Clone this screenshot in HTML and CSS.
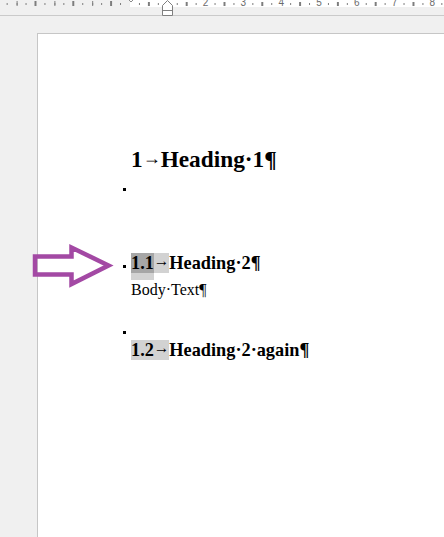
FILE: index.html
```html
<!DOCTYPE html>
<html>
<head>
<meta charset="utf-8">
<link rel="stylesheet" href="styles.css">
</head>
<body>
<div class="ruler">
  <div class="ruler-margin"></div>
  <div class="ruler-body">
    <div class="ruler-nums">
      <span></span><span></span><span>2</span><span>3</span><span>4</span><span>5</span><span>6</span><span>7</span><span>8</span>
    </div>
  </div>
  <svg class="first-indent" width="14" height="4" viewBox="0 0 14 4"><path d="M2 -3 L7 2 L12 -3" fill="#fff" stroke="#8a8a8a" stroke-width="1"/></svg>
  <svg class="left-indent" width="14" height="17" viewBox="0 0 14 17"><path d="M1.5 15.5 V5.5 L6.5 0.5 L11.5 5.5 V15.5 Z M1.5 10.5 H11.5" fill="#fff" stroke="#7f7f7f" stroke-width="1"/></svg>
</div>
<div class="workspace">
  <div class="page">
    <div class="para h1"><span class="mk"></span><span class="line"><span class="num">1</span><span class="tab tab-h1">→</span>Heading·1¶</span></div>
    <div class="para empty1"><span class="mk on"></span></div>
    <div class="para h2 first"><span class="mk on"></span><span class="line"><span class="field"><span class="num sel">1.1</span><span class="tab tab-h2">→</span></span>Heading·2¶</span></div>
    <div class="para body"><span class="mk"></span><span class="line">Body·Text¶</span></div>
    <div class="para empty2"><span class="mk on"></span></div>
    <div class="para h2 again"><span class="mk"></span><span class="line"><span class="field"><span class="num">1.2</span><span class="tab tab-h2">→</span></span>Heading·2·again¶</span></div>
  </div>
</div>
<svg class="callout" width="90" height="52" viewBox="28 240 90 52"><polygon points="35,256.5 71.5,256.5 71.5,247.5 108.5,265.5 71.5,284 71.5,274.5 35,274.5" fill="none" stroke="#a349a4" stroke-width="4.5" stroke-linejoin="miter"/></svg>
</body>
</html>
```

FILE: styles.css
```css
html, body {
  margin: 0;
  padding: 0;
}
body {
  width: 444px;
  height: 537px;
  overflow: hidden;
  background: #f0f0f0;
  font-family: "Liberation Serif", "Times New Roman", serif;
  position: relative;
}
.ruler {
  position: relative;
  display: flex;
  height: 15px;
  border-bottom: 1px solid #cacaca;
}
.ruler-margin {
  flex: 0 0 130px;
  background-image:
    linear-gradient(to right, #7d7d7d 0, #7d7d7d 1px, transparent 1px, transparent 9px, #7d7d7d 9px, #7d7d7d 10px, transparent 10px, transparent 28px, #7d7d7d 28px, #7d7d7d 29px, transparent 29px),
    linear-gradient(to right, #7d7d7d 0, #7d7d7d 1px, transparent 1px, transparent 18.4px, #7d7d7d 18.4px, #7d7d7d 19.4px, transparent 19.4px);
  background-size: 37.8px 2px, 37.8px 5px;
  background-position: 16.6px 3px, 16.6px 1px;
  background-repeat: repeat-x, repeat-x;
}
.ruler-body {
  flex: 1 1 auto;
  overflow: hidden;
  background-image:
    linear-gradient(to right, transparent 9px, #7d7d7d 9px, #7d7d7d 10px, transparent 10px, transparent 28px, #7d7d7d 28px, #7d7d7d 29px, transparent 29px),
    linear-gradient(to right, transparent 18.4px, #7d7d7d 18.4px, #7d7d7d 19.4px, transparent 19.4px),
    linear-gradient(#ffffff, #ffffff);
  background-size: 37.8px 2px, 37.8px 4px, 100% 7px;
  background-position: 0 3px, 0 2px, 0 0;
  background-repeat: repeat-x, repeat-x, no-repeat;
}
.ruler-nums {
  display: flex;
  margin-left: -18.9px;
  margin-top: -2px;
  font-family: "Liberation Sans", Arial, sans-serif;
  font-size: 10px;
  line-height: 10px;
  color: #6b6b6b;
}
.ruler-nums span {
  flex: 0 0 37.8px;
  text-align: center;
}
.first-indent {
  position: absolute;
  left: 124px;
  top: 0;
}
.left-indent {
  position: absolute;
  left: 161px;
  top: 0;
}
.workspace {
  padding: 17px 0 0 37px;
}
.page {
  background: #ffffff;
  border-left: 1px solid #c6c6c6;
  border-top: 1px solid #c6c6c6;
  height: 520px;
  padding: 112px 0 0 85px;
  box-sizing: border-box;
  color: #000;
}
.para {
  display: flex;
  align-items: flex-start;
}
.mk {
  flex: 0 0 8px;
  height: 3px;
}
.mk.on::before {
  content: "";
  display: block;
  width: 3px;
  height: 3px;
  background: #000;
}
.line {
  white-space: nowrap;
}
.tab {
  display: inline-block;
  font-family: "Liberation Serif", "Times New Roman", serif;
  font-weight: normal;
  text-align: center;
  line-height: 10px;
}
.h1 {
  font-size: 23.3px;
  line-height: 26px;
  font-weight: bold;
}
.tab-h1 {
  width: 18px;
  font-size: 18px;
  vertical-align: 3.5px;
}
.empty1 {
  margin-top: 16px;
  height: 3px;
}
.h2 {
  font-size: 18.3px;
  line-height: 22px;
  font-weight: bold;
}
.h2 .mk {
  margin-top: 12.7px;
}
.h2.first {
  margin-top: 61px;
}
.tab-h2 {
  width: 15.5px;
  font-size: 15.5px;
  vertical-align: 3px;
}
.field {
  background: #d2d2d2;
}
.field .sel {
  background: #a6a6a6;
  box-shadow: 0 7px 0 0 #d2d2d2;
}
.body {
  font-size: 16px;
  line-height: 19px;
  margin-top: 6.3px;
}
.empty2 {
  margin-top: 31.4px;
  height: 3px;
}
.h2.again {
  margin-top: 5.8px;
}
.callout {
  position: absolute;
  left: 28px;
  top: 240px;
}
```
